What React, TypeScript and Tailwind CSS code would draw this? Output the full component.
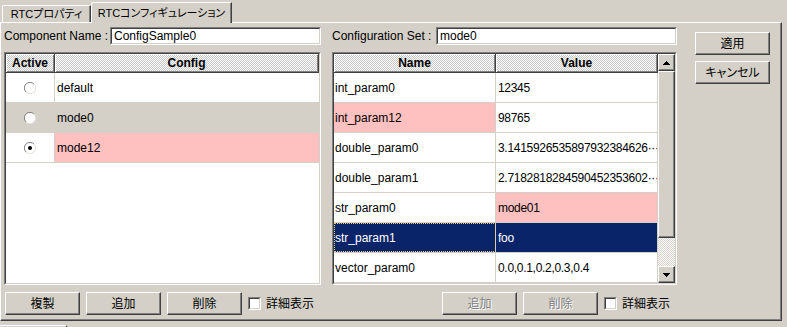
import React from 'react';

const raised =
  'border border-t-white border-l-white border-r-[#404040] border-b-[#404040] shadow-[inset_-1px_-1px_0_#808080]';

const headerBg =
  'bg-[image:repeating-conic-gradient(#ffffff_0%_25%,#c8c8c8_0%_50%)] bg-[length:2px_2px]';

interface Param {
  name: string;
  value: string;
  nameBg?: string;
  valueBg?: string;
  selected?: boolean;
}

const configs = [
  { name: 'default', active: false, rowBg: 'bg-white', cfgBg: 'bg-white' },
  { name: 'mode0', active: false, rowBg: 'bg-[#d4d0c8]', cfgBg: 'bg-[#d4d0c8]' },
  { name: 'mode12', active: true, rowBg: 'bg-white', cfgBg: 'bg-[#ffc0c0]' },
];

const params: Param[] = [
  { name: 'int_param0', value: '12345' },
  { name: 'int_param12', value: '98765', nameBg: 'bg-[#ffc0c0]' },
  { name: 'double_param0', value: '3.1415926535897932384626···' },
  { name: 'double_param1', value: '2.7182818284590452353602···' },
  { name: 'str_param0', value: 'mode01', valueBg: 'bg-[#ffc0c0]' },
  { name: 'str_param1', value: 'foo', selected: true },
  { name: 'vector_param0', value: '0.0,0.1,0.2,0.3,0.4' },
];

function Sunken({ className, children }: { className?: string; children?: React.ReactNode }) {
  return (
    <div className={`border border-t-[#808080] border-l-[#808080] border-r-white border-b-white ${className ?? ''}`}>
      <div className="h-full w-full border border-t-[#404040] border-l-[#404040] border-r-[#d4d0c8] border-b-[#d4d0c8]">
        {children}
      </div>
    </div>
  );
}

function WinButton({ label, disabled = false }: { label: string; disabled?: boolean }) {
  return (
    <button
      type="button"
      className={`flex h-[23px] w-[75px] shrink-0 items-center justify-center whitespace-nowrap bg-[#d4d0c8] text-[12px] [font-feature-settings:'palt'] ${raised} ${
        disabled ? 'text-[#808080] [text-shadow:1px_1px_0_#ffffff]' : 'text-black'
      }`}
    >
      {label}
    </button>
  );
}

function CheckBox() {
  return (
    <Sunken className="h-[13px] w-[13px] shrink-0">
      <div className="h-full w-full bg-white" />
    </Sunken>
  );
}

function Radio({ checked }: { checked: boolean }) {
  return (
    <svg width="12" height="12" viewBox="0 0 12 12">
      <circle cx="6" cy="6" r="5.5" fill="#ffffff" />
      <path d="M10 2 A5.6 5.6 0 0 0 2 10" stroke="#808080" fill="none" />
      <path d="M2 10 A5.6 5.6 0 0 0 10 2" stroke="#e4e0d8" fill="none" />
      {checked && <circle cx="6" cy="6" r="2" fill="#000000" />}
    </svg>
  );
}

function Arrow({ down = false }: { down?: boolean }) {
  return (
    <svg width="7" height="4" viewBox="0 0 7 4" className={down ? 'rotate-180' : ''}>
      <path d="M3 0h1v1h1v1h1v1h1v1H0V3h1V2h1V1h1z" fill="#000000" />
    </svg>
  );
}

function HeaderCell({ className, children }: { className?: string; children: React.ReactNode }) {
  return (
    <div
      className={`flex h-full items-center justify-center border-r border-b border-[#404040] font-bold shadow-[inset_1px_1px_0_#ffffff,inset_-1px_-1px_0_#808080] ${headerBg} ${className ?? ''}`}
    >
      {children}
    </div>
  );
}

function LabeledField({ label, value, labelWidth, fieldWidth }: { label: string; value: string; labelWidth: string; fieldWidth: string }) {
  return (
    <div className="flex h-[18px] items-center">
      <span className={`${labelWidth} whitespace-nowrap`}>{label}</span>
      <Sunken className={`h-[18px] ${fieldWidth}`}>
        <div className="flex h-full items-center bg-white pl-[2px]">{value}</div>
      </Sunken>
    </div>
  );
}

export default function App() {
  return (
    <div className="h-[327px] w-[787px] overflow-hidden bg-[#d4d0c8] text-[12px] text-black font-['Liberation_Sans','Noto_Sans_CJK_JP',sans-serif]">
      {/* tabs */}
      <div className="flex h-[22px] items-end pl-[2px]">
        <div className="flex h-[17px] w-[89px] items-center justify-center whitespace-nowrap rounded-tl-[2px] border-t border-l border-white border-r border-r-[#404040] text-[11px] shadow-[inset_-1px_0_0_#808080] [font-feature-settings:'palt']">
          RTCプロパティ
        </div>
        <div className="relative z-10 -mb-px flex h-[21px] w-[141px] items-center justify-center whitespace-nowrap rounded-tl-[2px] border-t border-l border-white border-r border-r-[#404040] bg-[#d4d0c8] text-[11px] shadow-[inset_-1px_0_0_#808080] [font-feature-settings:'palt']">
          RTCコンフィギュレーション
        </div>
      </div>

      {/* panel */}
      <div className="flex h-[299px] w-[782px] border-t border-l border-white border-r border-b border-r-[#404040] border-b-[#404040] pl-[3px] pt-[4px] shadow-[inset_-1px_-1px_0_#808080]">
        {/* configuration list */}
        <div className="flex w-[317px] flex-col">
          <LabeledField label="Component Name :" value="ConfigSample0" labelWidth="w-[106px]" fieldWidth="w-[211px]" />

          <Sunken className="mt-[7px] h-[233px] w-[317px]">
            <div className="flex h-full flex-col bg-white">
              <div className="flex h-[19px] shrink-0">
                <HeaderCell className="w-[49px]">Active</HeaderCell>
                <HeaderCell className="flex-1">Config</HeaderCell>
              </div>
              {configs.map((c) => (
                <div key={c.name} className={`flex h-[30px] shrink-0 border-b border-[#d4d0c8] ${c.rowBg}`}>
                  <div className="flex w-[49px] items-center justify-center border-r border-[#d4d0c8]">
                    <Radio checked={c.active} />
                  </div>
                  <div className={`flex flex-1 items-center pl-[2px] ${c.cfgBg}`}>{c.name}</div>
                </div>
              ))}
            </div>
          </Sunken>

          <div className="mt-[7px] flex h-[23px] items-center gap-[6px] pl-[1px]">
            <WinButton label="複製" />
            <WinButton label="追加" />
            <WinButton label="削除" />
            <div className="flex items-center gap-[5px]">
              <CheckBox />
              <span>詳細表示</span>
            </div>
          </div>
        </div>

        {/* parameter table */}
        <div className="ml-[11px] flex w-[345px] flex-col">
          <LabeledField label="Configuration Set :" value="mode0" labelWidth="w-[104px]" fieldWidth="w-[241px]" />

          <Sunken className="mt-[7px] h-[233px] w-[345px]">
            <div className="flex h-full bg-white">
              <div className="flex w-[324px] flex-col">
                <div className="flex h-[19px] shrink-0">
                  <HeaderCell className="w-[162px]">Name</HeaderCell>
                  <HeaderCell className="w-[162px]">Value</HeaderCell>
                </div>
                {params.map((p) => (
                  <div key={p.name} className="flex h-[30px] shrink-0 border-b border-[#d4d0c8]">
                    <div
                      className={`flex w-[162px] items-center border-r border-[#d4d0c8] pl-[1px] ${
                        p.selected
                          ? 'bg-[#0a246a] text-white outline-1 outline-dotted -outline-offset-1 outline-[#e8c870]'
                          : p.nameBg ?? 'bg-white'
                      }`}
                    >
                      {p.name}
                    </div>
                    <div
                      className={`flex w-[162px] items-center overflow-hidden whitespace-nowrap border-r border-[#d4d0c8] pl-[2px] tracking-[-0.3px] ${
                        p.selected ? 'bg-[#0a246a] text-white' : p.valueBg ?? 'bg-white'
                      }`}
                    >
                      {p.value}
                    </div>
                  </div>
                ))}
              </div>

              {/* scrollbar */}
              <div className="flex w-[17px] flex-col bg-[image:repeating-conic-gradient(#ffffff_0%_25%,#d4d0c8_0%_50%)] bg-[length:2px_2px]">
                <div className={`flex h-[17px] shrink-0 items-center justify-center bg-[#d4d0c8] ${raised}`}>
                  <Arrow />
                </div>
                <div className={`h-[167px] shrink-0 bg-[#d4d0c8] ${raised}`} />
                <div className="flex-1" />
                <div className={`flex h-[17px] shrink-0 items-center justify-center bg-[#d4d0c8] ${raised}`}>
                  <Arrow down />
                </div>
              </div>
            </div>
          </Sunken>

          <div className="mt-[7px] flex h-[23px] items-center gap-[6px] pl-[110px]">
            <WinButton label="追加" disabled />
            <WinButton label="削除" disabled />
            <div className="flex items-center gap-[5px]">
              <CheckBox />
              <span>詳細表示</span>
            </div>
          </div>
        </div>

        {/* apply / cancel */}
        <div className="ml-[18px] flex flex-col gap-[6px] pt-[5px]">
          <WinButton label="適用" />
          <WinButton label="キャンセル" />
        </div>
      </div>

      <div className="mt-[4px] h-[2px] w-[67px] border-t border-white border-r border-r-[#404040]" />
    </div>
  );
}
